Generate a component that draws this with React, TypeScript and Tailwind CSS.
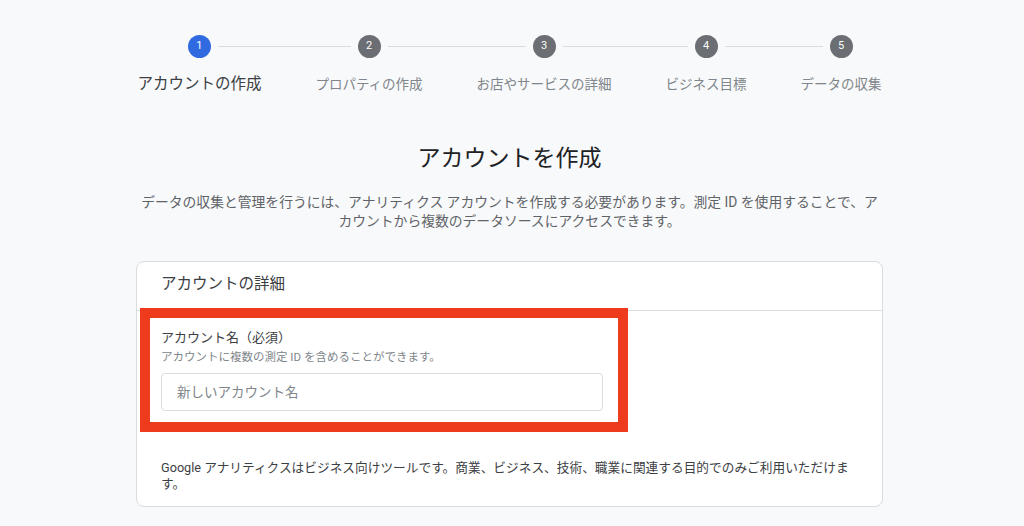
import React from 'react';

const steps = [
  'アカウントの作成',
  'プロパティの作成',
  'お店やサービスの詳細',
  'ビジネス目標',
  'データの収集',
];

const Stepper: React.FC = () => (
  <div className="flex justify-center">
    {steps.map((label, i) => {
      const active = i === 0;
      return (
        <div key={label} className="flex flex-col items-stretch">
          <div className="flex items-center h-[23px]">
            <div className={`flex-1 h-px ${i === 0 ? 'bg-transparent' : 'bg-[#dadce0]'}`} />
            <div
              className={`mx-[7px] w-[23px] h-[23px] rounded-full flex items-center justify-center text-[11px] text-white ${
                active ? 'bg-[#2f6ae1]' : 'bg-[#6b6e72]'
              }`}
            >
              {i + 1}
            </div>
            <div className={`flex-1 h-px ${i === steps.length - 1 ? 'bg-transparent' : 'bg-[#dadce0]'}`} />
          </div>
          <div
            className={`mt-[14px] px-[27px] leading-[24px] whitespace-nowrap text-center ${
              active ? 'text-[15.5px] text-[#3c4043]' : 'text-[13.5px] text-[#80868b]'
            }`}
          >
            {label}
          </div>
        </div>
      );
    })}
  </div>
);

export default function App() {
  return (
    <div className="min-h-screen bg-[#f8f9fa] pt-[35px] font-[Roboto,'Noto_Sans_CJK_JP',sans-serif]">
      <div className="ml-[136px] w-[747px]">
        <Stepper />

        <h1 className="mt-[47px] text-center text-[23px] leading-[32px] text-[#202124]">
          アカウントを作成
        </h1>
        <p className="mt-[18px] px-[3px] text-center text-[13.8px] leading-[19px] text-[#5f6368]">
          データの収集と管理を行うには、アナリティクス アカウントを作成する必要があります。測定 ID を使用することで、アカウントから複数のデータソースにアクセスできます。
        </p>

        <div className="relative mt-[30px] bg-white border border-[#dadce0] rounded-lg">
          <div className="h-[49px] border-b border-[#dadce0] pt-[10px] px-6 text-[15.5px] leading-[24px] text-[#3c4043]">
            アカウントの詳細
          </div>
          <div className="px-6 pt-[17px] pb-[14px]">
            <div className="text-[13px] leading-[20px] text-[#3c4043]">アカウント名（必須）</div>
            <div className="mt-[1px] text-[11.5px] leading-[16px] text-[#80868b]">
              アカウントに複数の測定 ID を含めることができます。
            </div>
            <input
              type="text"
              placeholder="新しいアカウント名"
              className="mt-[8px] block w-[442px] h-[38px] rounded-[4px] border border-[#dadce0] pl-[15px] text-[13.5px] text-[#3c4043] placeholder-[#80868b] outline-none"
            />
            <p className="mt-[49px] text-[12.7px] leading-[16px] text-[#3c4043]">
              Google アナリティクスはビジネス向けツールです。商業、ビジネス、技術、職業に関連する目的でのみご利用いただけます。
            </p>
          </div>

          {/* highlight annotation */}
          <div className="absolute left-[3px] top-[46px] w-[488px] h-[124px] border-[10px] border-[#ef3b1d] pointer-events-none" />
        </div>
      </div>
    </div>
  );
}
